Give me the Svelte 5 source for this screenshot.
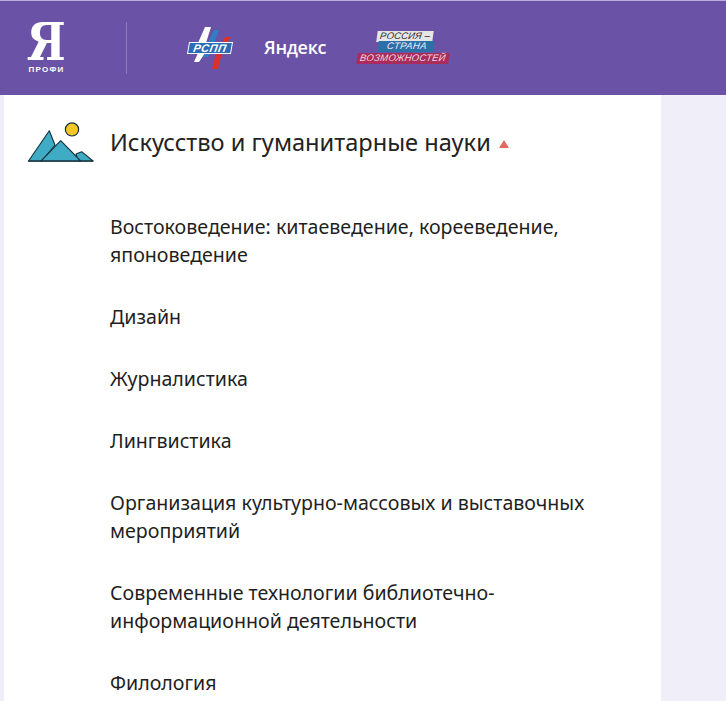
<script>
	const directions = [
		'Востоковедение: китаеведение, корееведение, японоведение',
		'Дизайн',
		'Журналистика',
		'Лингвистика',
		'Организация культурно-массовых и выставочных мероприятий',
		'Современные технологии библиотечно-информационной деятельности',
		'Филология'
	];
</script>

<div class="page">
	<header class="header">
		<div class="profi">
			<span class="ya">Я</span>
			<span class="profi-name">ПРОФИ</span>
		</div>
		<div class="divider"></div>
		<div class="partners">
			<div class="rspp">
				<svg width="46" height="48" viewBox="0 0 46 48">
					<path d="M18 3h6L19 19h-8z M11 29h7L12 38H7z" fill="#fff" />
					<path d="M27 6h5L27 19h-6z M18 29h5L21 33h-5z" fill="#2f7fc4" />
					<path d="M38 13h6L40 19h-5z M29 29h6L31 45h-6z" fill="#d9322e" />
				</svg>
				<span class="rspp-text">РСПП</span>
			</div>
			<span class="yandex">Яндекс</span>
			<div class="russia">
				<span class="r1">РОССИЯ –</span>
				<span class="r2">СТРАНА</span>
				<span class="r3">ВОЗМОЖНОСТЕЙ</span>
			</div>
		</div>
	</header>

	<main class="card">
		<section class="group">
			<div class="group-icon">
				<svg width="66" height="40" viewBox="0 0 66 40">
					<circle cx="44" cy="7.4" r="6.6" fill="#f5c726" stroke="#16323c" stroke-width="1.2" />
					<path d="M0.5 39 L21.3 8.7 L27 23 L14 39z" fill="#3fabc4" stroke="#16323c" stroke-width="1.1" stroke-linejoin="round" />
					<path d="M48 32 L53.7 29.7 L65 39 L50 39z" fill="#3fabc4" stroke="#16323c" stroke-width="1.1" stroke-linejoin="round" />
					<path d="M13 39 L32.7 18.7 L52.7 39z" fill="#3fabc4" stroke="#16323c" stroke-width="1.1" stroke-linejoin="round" />
					<path d="M0 39.2H65.5" stroke="#16323c" stroke-width="1.3" />
				</svg>
			</div>
			<div class="group-body">
				<h2 class="group-title">Искусство и гуманитарные науки <span class="caret"></span></h2>
				<ul class="list">
					{#each directions as item}
						<li>{item}</li>
					{/each}
				</ul>
			</div>
		</section>
	</main>
</div>

<style>
	:global(body) {
		margin: 0;
		background: #f0eff9;
		overflow: hidden;
	}

	.page {
		height: 701px;
		overflow: hidden;
		font-family: 'Noto Sans', 'Open Sans', sans-serif;
	}

	.header {
		height: 94px;
		background: #6a53a6;
		border-top: 1px solid #b9addb;
		display: flex;
		align-items: center;
	}

	.profi {
		width: 37px;
		margin-left: 28px;
		display: flex;
		flex-direction: column;
		align-items: center;
		color: #fff;
	}

	.ya {
		font-family: 'DejaVu Serif', serif;
		font-weight: 700;
		font-size: 48px;
		line-height: 38px;
		height: 38px;
		transform: scale(0.92, 1.1);
	}

	.profi-name {
		font-family: 'Liberation Sans', sans-serif;
		font-weight: 700;
		font-size: 8px;
		line-height: 9px;
		letter-spacing: 1.2px;
		margin-top: 5px;
	}

	.divider {
		width: 1px;
		height: 52px;
		background: #8d7cbd;
		margin-left: 61px;
	}

	.partners {
		display: flex;
		align-items: center;
		margin-left: 60px;
	}

	.rspp {
		position: relative;
		width: 46px;
		height: 48px;
	}

	.rspp svg {
		display: block;
	}

	.rspp-text {
		position: absolute;
		left: 2px;
		top: 19px;
		width: 42px;
		height: 10px;
		background: #2a6cb5;
		outline: 1px solid #fff;
		color: #fff;
		font-family: 'Liberation Sans', sans-serif;
		font-style: italic;
		font-weight: 700;
		font-size: 11px;
		line-height: 10px;
		letter-spacing: 0.5px;
		text-align: center;
		transform: skewX(-10deg);
	}

	.yandex {
		margin-left: 31px;
		margin-bottom: 2px;
		color: #fff;
		font-family: 'Open Sans', sans-serif;
		font-weight: 600;
		font-size: 18px;
		letter-spacing: -0.3px;
	}

	.russia {
		margin-left: 31px;
		display: flex;
		flex-direction: column;
		align-items: center;
		font-family: 'Liberation Sans', sans-serif;
		font-style: italic;
		font-size: 9.5px;
		line-height: 10.5px;
		width: 91px;
		margin-bottom: 2px;
	}

	.russia span {
		transform: skewX(-8deg);
		white-space: nowrap;
	}

	.r1 {
		background: #e6e6e6;
		color: #333;
		padding: 0 3px;
		margin-left: 4px;
		letter-spacing: 0.2px;
	}

	.r2 {
		background: #2f6fa8;
		color: #e8eef8;
		padding: 0 7px 0 9px;
		margin-left: 6px;
		letter-spacing: 0.4px;
	}

	.r3 {
		background: #a82d5c;
		color: #f2d5df;
		padding: 0 3px;
		margin-top: 1px;
		letter-spacing: 0.25px;
	}

	.card {
		margin-left: 4px;
		width: 657px;
		min-height: 606px;
		background: #fff;
		box-sizing: border-box;
		padding-top: 27px;
	}

	.group {
		display: flex;
	}

	.group-icon {
		width: 106px;
		padding-left: 24px;
		box-sizing: border-box;
		flex: none;
	}

	.group-icon svg {
		display: block;
	}

	.group-title {
		margin: 0;
		font-weight: 400;
		font-size: 23.6px;
		line-height: 40px;
		color: #222;
	}

	.caret {
		display: inline-block;
		width: 0;
		height: 0;
		margin-left: 2px;
		border-left: 5px solid transparent;
		border-right: 5px solid transparent;
		border-bottom: 8px solid #e2695c;
		vertical-align: 3px;
	}

	.list {
		list-style: none;
		margin: 0;
		padding: 51px 0 0;
		width: 490px;
	}

	.list li {
		font-size: 19.6px;
		line-height: 28px;
		color: #1f1f1f;
		margin-bottom: 34px;
	}
</style>
